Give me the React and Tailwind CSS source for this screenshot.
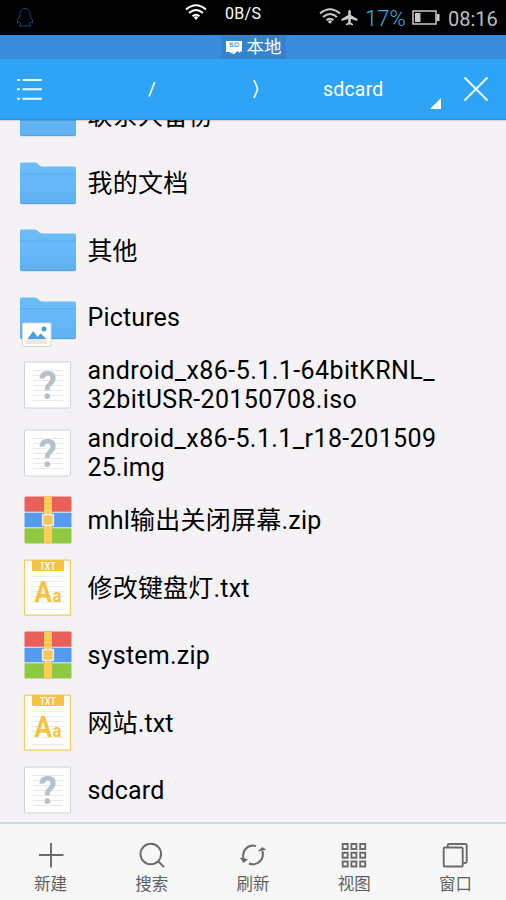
import React from "react";

const fontStack = "font-['Roboto','Noto_Sans_CJK_SC',sans-serif]";

function Folder({ picture }) {
  return (
    <svg width="64" height="60" viewBox="0 0 64 60" className="block">
      <defs>
        <linearGradient id="folder" x1="0" y1="0" x2="0" y2="1">
          <stop offset="0" stopColor="#6cbefb" />
          <stop offset="1" stopColor="#60b1f1" />
        </linearGradient>
      </defs>
      <path d="M4 11Q4 9.500 5.500 9.500H19C22 9.500 23 13.500 26.500 13.500H58.500Q60 13.500 60 15V49.500Q60 51 58.500 51H5.500Q4 51 4 49.500Z" fill="url(#folder)" />
      <path d="M4 21H60" stroke="#57a9e8" strokeWidth="0.800" />
      <path d="M5 50.700H59" stroke="#4b9bd7" strokeWidth="0.800" />
      {picture && (
        <g>
          <rect x="6.500" y="35" width="28.500" height="23.500" rx="1" fill="#fff" stroke="#d6d6d6" strokeWidth="1" />
          <path d="M8.500 56L17.500 43.500L22 49L25.500 45.500L32 56Z" fill="#e9e8e2" />
          <path d="M11.500 51L17.300 43L21.500 49L24.500 45.500L30.500 51Z" fill="#4b9edb" />
          <circle cx="28" cy="41" r="2.500" fill="#4b9edb" />
        </g>
      )}
    </svg>
  );
}

function Unknown() {
  return (
    <svg width="64" height="60" viewBox="0 0 64 60" className="block">
      <rect x="8.500" y="7" width="46" height="46" rx="1" fill="#fff" stroke="#ced2d8" />
      <path d="M17 15.500H47M17 20.500H47M17 25.500H47M17 30.500H47M17 35.500H47M17 40.500H47M17 45.500H47" stroke="#e8e9ec" />
      <text x="22.800" y="44.300" fill="#b9bfc8" fontSize="39" fontWeight="700" textLength="18" lengthAdjust="spacingAndGlyphs">?</text>
    </svg>
  );
}

function Zip() {
  return (
    <svg width="64" height="60" viewBox="0 0 64 60" className="block">
      <path d="M8.500 21.700V8Q8.500 6.500 10 6.500H54Q55.500 6.500 55.500 8V21.700Z" fill="#e9605b" />
      <rect x="8.500" y="22.700" width="47" height="14.600" fill="#549aee" />
      <path d="M8.500 38.300H55.500V52Q55.500 53.500 54 53.500H10Q8.500 53.500 8.500 52Z" fill="#8fc842" />
      <rect x="28" y="6.500" width="8" height="47" fill="#ffcb5b" />
      <rect x="26.700" y="24.700" width="10.600" height="10.600" fill="#f7c45b" stroke="#ece9df" strokeWidth="1.700" />
    </svg>
  );
}

function Txt() {
  return (
    <svg width="64" height="60" viewBox="0 0 64 60" className="block">
      <rect x="8.500" y="2.200" width="46" height="55" rx="1" fill="#fff" stroke="#f4c85c" strokeWidth="1.200" />
      <path d="M16 18.500H48M16 23.500H48M16 28.500H48M16 33.500H48M16 38.500H48M16 44.500H48M16 51.500H48" stroke="#eeeeef" />
      <path d="M16 2H48V11.500Q48 13 46.500 13H17.500Q16 13 16 11.500Z" fill="#f6c343" />
      <text x="24" y="11.500" fill="#fff" fontSize="10.500" fontWeight="500" textLength="15.500" lengthAdjust="spacingAndGlyphs">TXT</text>
      <text x="18.500" y="43.800" fill="#f6c343" fontSize="29" fontWeight="700" textLength="17.500" lengthAdjust="spacingAndGlyphs">A</text>
      <text x="36.500" y="43.800" fill="#f6c343" fontSize="17.500" fontWeight="700" textLength="9" lengthAdjust="spacingAndGlyphs">a</text>
    </svg>
  );
}

function PictureFolder() {
  return <Folder picture />;
}

// Each row: icon, [text, letter spacing] lines, vertical nudge for CJK names
const files = [
  [Folder, [["联系人备份", "tracking-[0.25px]"]], "pt-0.5"],
  [Folder, [["我的文档", "tracking-[0.25px]"]], "pt-0.5"],
  [Folder, [["其他", "tracking-[0.1px]"]], "pt-0.5"],
  [PictureFolder, [["Pictures", "tracking-[0.15px]"]], "pt-0"],
  [
    Unknown,
    [
      ["android_x86-5.1.1-64bitKRNL_", "tracking-[0.44px]"],
      ["32bitUSR-20150708.iso", "tracking-[0.36px]"],
    ],
    "pt-0",
  ],
  [
    Unknown,
    [
      ["android_x86-5.1.1_r18-201509", "tracking-[0.42px]"],
      ["25.img", "tracking-[0.1px]"],
    ],
    "pt-0",
  ],
  [Zip, [["mhl输出关闭屏幕.zip", "tracking-[0.25px]"]], "pt-0"],
  [Txt, [["修改键盘灯.txt", "tracking-[0.2px]"]], "pt-0.5"],
  [Zip, [["system.zip", "tracking-[0.25px]"]], "pt-0"],
  [Txt, [["网站.txt", "tracking-[0.1px]"]], "pt-0.5"],
  [Unknown, [["sdcard", "tracking-[0.15px]"]], "pt-0"],
];

function Wifi({ className, color }) {
  return (
    <svg width="22" height="17" viewBox="0 0 22 17" className={className} fill="none" stroke={color} strokeWidth="2">
      <path d="M1 5.500Q11 -3 21 5.500M4 9Q11 3 18 9M7.500 12.300Q11 9.300 14.500 12.300" />
      <path d="M8.700 13.200Q11 11.500 13.300 13.200L11 16Z" fill={color} stroke="none" />
    </svg>
  );
}

function StatusBar() {
  return (
    <header className="flex h-[35px] shrink-0 bg-black">
      <svg width="18" height="21" viewBox="0 0 18 21" className="mt-[7px] ml-4 shrink-0" fill="none" stroke="#13447a" strokeWidth="1">
        <path d="M4 9V7C4 3 6 1.500 9 1.500S14 3 14 7V9L16.500 13V16L14.500 15L13.500 17L15 19H10L9 18.500L8 19H3.500L5 17L3.500 15L1.500 16V13Z" />
      </svg>
      <Wifi color="#fff" className="mt-1 ml-[151px] shrink-0" />
      <span className="mt-1 ml-[18px] w-[38px] shrink-0 text-[16px] leading-[20px] tracking-[0.3px] whitespace-nowrap text-white">0B/S</span>
      <Wifi color="#c9c9c9" className="mt-[8px] ml-[56px] shrink-0" />
      <svg width="17" height="17" viewBox="0 0 17 17" className="mt-[9px] shrink-0" fill="#c9c9c9">
        <path d="M7.200 6V2Q8.500 0 9.800 2V6L16.500 10V12L9.800 10V13.500L12 15V16.300L8.500 15.500L5 16.300V15L7.200 13.500V10L.5 12V10Z" />
      </svg>
      <span className="mt-[6px] ml-[7px] w-[41px] shrink-0 text-[22px] leading-[25px] font-light whitespace-nowrap text-[#35b5e5]">17%</span>
      <svg width="28" height="15" viewBox="0 0 28 15" className="mt-[10px] ml-[6px] shrink-0" fill="none" stroke="#c9c9c9">
        <rect x="1" y="1" width="23" height="13" strokeWidth="1.500" />
        <rect x="3" y="3" width="5.500" height="9" fill="#c9c9c9" stroke="none" />
        <rect x="24.500" y="4" width="3" height="7" fill="#c9c9c9" stroke="none" />
      </svg>
      <span className="mt-[7px] ml-[8px] text-[20px] leading-[24px] whitespace-nowrap text-[#bdbdbd]">08:16</span>
    </header>
  );
}

function PathBar() {
  return (
    <nav className="z-10 flex h-[61px] shrink-0 border-b border-[#2496ea] bg-[#2fa4f7] text-white shadow-[0_1px_1px_rgba(0,0,0,0.12)]">
      <svg width="26" height="23" viewBox="0 0 26 23" className="mt-[19px] ml-[17px] shrink-0" stroke="#e9fcff" strokeWidth="2">
        <path d="M0 2H3M0 11.300H3M0 20.700H3M5.500 2H25M5.500 11.300H25M5.500 20.700H25" />
      </svg>
      <span className="mt-[17px] ml-[58px] w-[102px] text-center text-[19px] leading-[26px]">/</span>
      <svg width="8" height="20" viewBox="0 0 8 20" className="mt-[20px] ml-[49px] shrink-0" fill="none" stroke="#effcff" strokeWidth="1.800">
        <path d="M2 1L5 8Q5.800 10 5 12L2 19" />
      </svg>
      <span className="mt-[18px] ml-[63px] w-[61px] shrink-0 text-[19.500px] leading-[26px] tracking-[0.200px] whitespace-nowrap">sdcard</span>
      <svg width="11" height="11" viewBox="0 0 11 11" className="mt-[39px] ml-[46px] shrink-0" fill="#fff">
        <path d="M11 0V11H0Z" />
      </svg>
      <svg width="26" height="26" viewBox="0 0 26 26" className="mt-[17px] ml-[22px] shrink-0" stroke="#effcff" strokeWidth="1.900">
        <path d="M1.500 1.500L24.500 24.500M24.500 1.500L1.500 24.500" />
      </svg>
    </nav>
  );
}

const iconPaths = {
  新建: <path d="M14 2V26.500M2 14H26.500" />,
  搜索: (
    <g>
      <circle cx="12.800" cy="13" r="10.300" />
      <path d="M20.300 20.500L26 26" />
    </g>
  ),
  刷新: (
    <g strokeWidth="2">
      <path d="M4.500 18C2.500 9.500 9 3 17 5M23.500 10C25.500 18.500 18.500 25.500 10 22.500" />
      <path d="M1.500 17L8.500 18.500L4.500 21.500Z M19.500 10L26.500 8.500L23 6.500Z" fill="#6b6b6b" strokeWidth="0.800" />
    </g>
  ),
  视图: <path d="M2.700 3h5v5h-5zM11.400 3h5v5h-5zM20.200 3h5v5h-5zM2.700 11.700h5v5h-5zM11.400 11.700h5v5h-5zM20.200 11.700h5v5h-5zM2.700 20.500h5v5h-5zM11.400 20.500h5v5h-5zM20.200 20.500h5v5h-5z" />,
  窗口: (
    <g>
      <rect x="2.700" y="6.500" width="19" height="19" rx="1" />
      <path d="M6.700 6.500V4.500Q6.700 3 8.200 3H24.200Q25.700 3 25.700 4.500V20.500Q25.700 22 24.200 22H22.200" />
    </g>
  ),
};

export default function App() {
  return (
    <main className={`flex h-[900px] w-[506px] flex-col overflow-hidden bg-[#f4f2f5] ${fontStack}`}>
      <StatusBar />
      <div className="flex h-6 shrink-0 justify-center bg-[#398ddc]">
        <div className="flex h-6 w-[65px] items-center bg-[#3583cc] pl-1 text-white">
          <svg width="18" height="15" viewBox="0 0 18 15" className="shrink-0">
            <path d="M1 1H17V11.500H15V13L13.500 11.500H12L9.500 14H7.500V12L5.500 14V12H1Z" fill="#fff" />
            <path d="M8 3H5V4.800H8V6.500H5M10 3H13Q15 4.800 13 6.500H10Z" fill="none" stroke="#3580c6" strokeWidth="0.800" />
          </svg>
          <span className="ml-1 text-[17.500px] leading-[23px] whitespace-nowrap">本地</span>
        </div>
      </div>
      <PathBar />
      <section className="min-h-0 flex-1 overflow-hidden">
        <ul className="-mt-[38.500px]">
          {files.map(([Icon, lines, nudge]) => (
            <li key={lines[0][0]} className="flex h-[67.500px] items-center pl-4">
              <Icon />
              <div className={`ml-[7.500px] text-[25px] leading-[29px] whitespace-nowrap text-black ${nudge}`}>
                {lines.map(([text, tracking]) => (
                  <div key={text} className={tracking}>{text}</div>
                ))}
              </div>
            </li>
          ))}
        </ul>
      </section>
      <footer className="grid h-[78px] shrink-0 grid-cols-5 border-t-2 border-[#d0dadb] bg-[#f7f7f7] text-[#606060]">
        {Object.entries(iconPaths).map(([label, icon]) => (
          <div key={label} className="flex flex-col items-center pt-[17px]">
            <svg width="28" height="28" viewBox="0 0 28 28" fill="none" stroke="#6b6b6b" strokeWidth="1.900">
              {icon}
            </svg>
            <span className="mt-1 text-[16.500px] leading-[24px]">{label}</span>
          </div>
        ))}
      </footer>
    </main>
  );
}
